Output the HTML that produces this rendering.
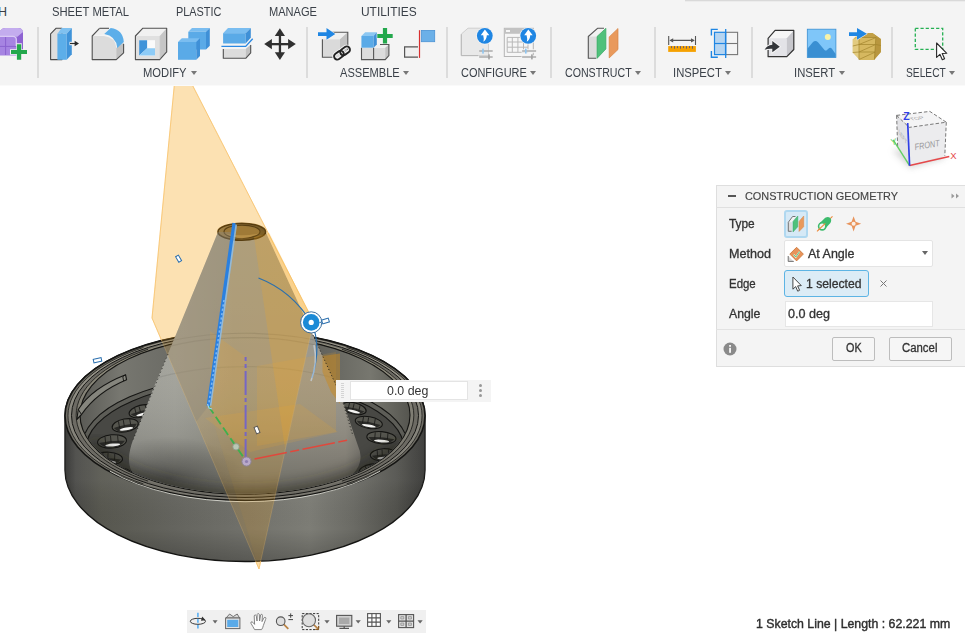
<!DOCTYPE html>
<html lang="en">
<head>
<meta charset="utf-8">
<title>Construction Geometry</title>
<style>
html,body{margin:0;padding:0;}
body{width:965px;height:635px;overflow:hidden;background:#fff;position:relative;font-family:"Liberation Sans",sans-serif;color:#3a3a3a;}
.abs{position:absolute;}
#toolbar{position:absolute;left:0;top:0;width:965px;height:85px;background:#f4f4f4;border-bottom:1px solid #fafafa;}
.t{position:absolute;white-space:nowrap;line-height:1;transform-origin:0 0;}
.tab{font-size:12.5px;color:#3a4048;top:6.4px;}
.grp{font-size:12px;color:#3a4048;top:67.2px;}
.sep{position:absolute;top:27px;width:2px;height:51px;background:#dcdcdc;margin-left:-0.5px;}
.dd{position:absolute;width:0;height:0;border-left:3px solid transparent;border-right:3px solid transparent;border-top:4px solid #777;top:71px;}
.ico{position:absolute;overflow:visible;}
#scene{position:absolute;left:0;top:0;}
#panel{position:absolute;left:716px;top:185px;width:249px;height:182px;background:#f4f4f4;box-shadow:inset 1px 0 0 #dedede,inset 0 1px 0 #dedede,inset 0 -1px 0 #dedede;}
#panel .t{font-size:12px;color:#333;-webkit-text-stroke:0.3px #333;}
.box{position:absolute;box-sizing:border-box;}
#float{position:absolute;left:336px;top:380px;width:155px;height:21.6px;background:#f4f4f4;}
#nav{position:absolute;left:187px;top:610px;width:239px;height:23px;background:#f0f0f0;}
</style>
</head>
<body>
<svg id="scene" width="965" height="635" viewBox="0 0 965 635">
<defs>
<linearGradient id="gWall" x1="65" x2="425" y1="0" y2="0" gradientUnits="userSpaceOnUse">
<stop offset="0" stop-color="#2f2f2d"/><stop offset="0.03" stop-color="#484845"/><stop offset="0.1" stop-color="#57574f"/><stop offset="0.3" stop-color="#64645e"/><stop offset="0.5" stop-color="#71716b"/><stop offset="0.68" stop-color="#7d7d76"/><stop offset="0.8" stop-color="#6b6b65"/><stop offset="0.92" stop-color="#51514c"/><stop offset="1" stop-color="#343432"/>
</linearGradient>
<linearGradient id="gWallV" x1="0" x2="0" y1="480" y2="562" gradientUnits="userSpaceOnUse">
<stop offset="0" stop-color="#fff" stop-opacity="0.06"/><stop offset="0.6" stop-color="#000" stop-opacity="0"/><stop offset="1" stop-color="#000" stop-opacity="0.22"/>
</linearGradient>
<linearGradient id="gCone" x1="128" x2="362" y1="0" y2="0" gradientUnits="userSpaceOnUse">
<stop offset="0" stop-color="#9e9e97"/><stop offset="0.2" stop-color="#a3a39b"/><stop offset="0.45" stop-color="#97978e"/><stop offset="0.75" stop-color="#9a978c"/><stop offset="0.93" stop-color="#9a968b"/><stop offset="1" stop-color="#85827a"/>
</linearGradient>
<linearGradient id="gConeV" x1="0" x2="0" y1="237" y2="500" gradientUnits="userSpaceOnUse">
<stop offset="0" stop-color="#fff" stop-opacity="0.06"/><stop offset="0.45" stop-color="#fff" stop-opacity="0.02"/><stop offset="0.75" stop-color="#000" stop-opacity="0.08"/><stop offset="1" stop-color="#000" stop-opacity="0.3"/>
</linearGradient>
<radialGradient id="gConeSh" cx="170" cy="478" r="75" gradientUnits="userSpaceOnUse" gradientTransform="translate(170 478) scale(1 0.55) translate(-170 -478)">
<stop offset="0" stop-color="#000" stop-opacity="0.33"/><stop offset="1" stop-color="#000" stop-opacity="0"/>
</radialGradient>
<clipPath id="cInner"><ellipse cx="245" cy="415" rx="164.5" ry="78.7"/></clipPath>
<clipPath id="cCone"><path d="M0,0 H965 V415 H409.5 A164.5,78.7 0 0 1 80.5,415 H0 Z"/></clipPath>
<linearGradient id="gInWall" x1="80" x2="410" y1="0" y2="0" gradientUnits="userSpaceOnUse">
<stop offset="0" stop-color="#5a5a55"/><stop offset="0.12" stop-color="#777770"/><stop offset="0.3" stop-color="#6a6a64"/><stop offset="0.7" stop-color="#5f5f59"/><stop offset="0.88" stop-color="#77776f"/><stop offset="1" stop-color="#55554f"/>
</linearGradient>
<filter id="fBlur" x="-20%" y="-20%" width="140%" height="140%"><feGaussianBlur stdDeviation="7"/></filter>
<mask id="mOut" maskUnits="userSpaceOnUse" x="0" y="0" width="965" height="635"><rect x="0" y="0" width="965" height="635" fill="#fff"/>
<path d="M65,415.7 A180,84.8 0 0 1 425,415.7 L425,470 A180,91.5 0 0 1 65,470 Z" fill="#000"/><use href="#coneP" fill="#000"/><ellipse cx="241.8" cy="231.7" rx="23.9" ry="8.5" fill="#000"/></mask>
<linearGradient id="gRing" x1="218" x2="266" y1="0" y2="0" gradientUnits="userSpaceOnUse"><stop offset="0" stop-color="#8f7a4e"/><stop offset="0.5" stop-color="#74603a"/><stop offset="1" stop-color="#5c4a26"/></linearGradient>
<linearGradient id="gRimA" x1="0" x2="0" y1="331" y2="500" gradientUnits="userSpaceOnUse"><stop offset="0" stop-color="#a5a193"/><stop offset="0.45" stop-color="#8a887f"/><stop offset="1" stop-color="#7c7a72"/></linearGradient>
<linearGradient id="gRimB" x1="0" x2="0" y1="331" y2="500" gradientUnits="userSpaceOnUse"><stop offset="0" stop-color="#9c9884"/><stop offset="0.45" stop-color="#807e74"/><stop offset="1" stop-color="#74726a"/></linearGradient>
<clipPath id="cPlane"><path d="M174.8,80 L152,318 L259,569 L313.5,321.5 L189.8,80 Z"/></clipPath>
<linearGradient id="gVeil" x1="0" x2="0" y1="236" y2="490" gradientUnits="userSpaceOnUse">
<stop offset="0" stop-color="#b4b4ac" stop-opacity="0.55"/><stop offset="0.6" stop-color="#9a9a92" stop-opacity="0.45"/><stop offset="1" stop-color="#8a8a82" stop-opacity="0"/>
</linearGradient>
<clipPath id="cView"><rect x="0" y="85" width="965" height="550"/></clipPath>
<path id="coneP" d="M218,232 L168,354 L155.5,383 L133,440 Q125,462 133,473 Q150,488 200,496 Q245,503 300,495 Q338,488 353,474 Q365,461 358,446 L341,396 L313,335 L265.7,232 Z"/>
</defs>
<g clip-path="url(#cView)">
<!-- dish body -->
<path d="M65,415.7 A180,84.8 0 0 1 425,415.7 L425,470 A180,91.5 0 0 1 65,470 Z" fill="url(#gWall)" stroke="#151513" stroke-width="1.4"/>
<path d="M65,415.7 A180,84.8 0 0 1 425,415.7 L425,470 A180,91.5 0 0 1 65,470 Z" fill="url(#gWallV)"/>
<ellipse cx="245" cy="415.7" rx="180" ry="84.8" fill="#6f6d65" stroke="#151513" stroke-width="1.6"/>
<ellipse cx="245" cy="415.7" rx="177.2" ry="83.3" fill="url(#gRimA)"/><path d="M143.4,483.9 A177.2,83.3 0 0 1 143.4,347.5 M346.6,347.5 A177.2,83.3 0 0 1 346.6,483.9" fill="none" stroke="#1a1a18" stroke-width="0.8"/>
<ellipse cx="245" cy="415.5" rx="173.5" ry="82" fill="#6d6b64" stroke="#151513" stroke-width="1"/>
<ellipse cx="245" cy="415.2" rx="169" ry="80.5" fill="url(#gRimB)"/><path d="M148.1,481.1 A169,80.5 0 0 1 148.1,349.3 M341.9,349.3 A169,80.5 0 0 1 341.9,481.1" fill="none" stroke="#151513" stroke-width="0.8"/>
<ellipse cx="245" cy="415" rx="165" ry="79.2" fill="url(#gInWall)" stroke="#151513" stroke-width="1.1"/>
<g clip-path="url(#cInner)">
<ellipse cx="245" cy="447" rx="163" ry="71" fill="#5d5d57" stroke="#151513" stroke-width="1.1"/>
<ellipse cx="245" cy="449" rx="159" ry="68" fill="#484844" stroke="#151513" stroke-width="1.1"/>
<g transform="rotate(-14 141.3 411.2)"><ellipse cx="141.3" cy="411.2" rx="12.5" ry="6" fill="#56564f" stroke="#151513" stroke-width="1.1"/><path d="M130.3,411.7 Q141.3,410.0 152.3,411.7 Q148.8,416.9 141.3,416.9 Q133.8,416.9 130.3,411.7 Z" fill="#2a2a27"/><ellipse cx="141.8" cy="414.5" rx="6.5" ry="1.32" fill="#f4f4f2"/><path d="M140.3,406.0 V412.2 M146.55,406.09999999999997 V412.7 M135.675,406.4 V412.7" stroke="#1a1a18" stroke-width="0.8" fill="none"/></g>
<g transform="rotate(-10 125.2 425.4)"><ellipse cx="125.2" cy="425.4" rx="13.2" ry="6.5" fill="#56564f" stroke="#151513" stroke-width="1.1"/><path d="M113.5,425.9 Q125.2,424.09999999999997 136.9,425.9 Q133.12,431.59999999999997 125.2,431.59999999999997 Q117.28,431.59999999999997 113.5,425.9 Z" fill="#2a2a27"/><ellipse cx="125.7" cy="428.97499999999997" rx="6.864" ry="1.43" fill="#f4f4f2"/><path d="M124.2,419.7 V426.4 M130.744,419.875 V426.9 M119.26,420.2 V426.9" stroke="#1a1a18" stroke-width="0.8" fill="none"/></g>
<g transform="rotate(-5 112 441.4)"><ellipse cx="112" cy="441.4" rx="14.5" ry="6.6" fill="#56564f" stroke="#151513" stroke-width="1.1"/><path d="M99.0,441.9 Q112,440.08 125.0,441.9 Q120.7,447.7 112,447.7 Q103.3,447.7 99.0,441.9 Z" fill="#2a2a27"/><ellipse cx="112.5" cy="445.03" rx="7.54" ry="1.452" fill="#f4f4f2"/><path d="M111,435.59999999999997 V442.4 M118.09,435.78999999999996 V442.9 M105.475,436.12 V442.9" stroke="#1a1a18" stroke-width="0.8" fill="none"/></g>
<g transform="rotate(3 108.8 458.4)"><ellipse cx="108.8" cy="458.4" rx="13.7" ry="6.2" fill="#56564f" stroke="#151513" stroke-width="1.1"/><path d="M96.6,458.9 Q108.8,457.15999999999997 121.0,458.9 Q117.02,464.29999999999995 108.8,464.29999999999995 Q100.58,464.29999999999995 96.6,458.9 Z" fill="#2a2a27"/><ellipse cx="109.3" cy="461.81" rx="7.124" ry="1.364" fill="#f4f4f2"/><path d="M107.8,453.0 V459.4 M114.554,453.13 V459.9 M102.63499999999999,453.44 V459.9" stroke="#1a1a18" stroke-width="0.8" fill="none"/></g>
<g transform="rotate(10 121 474)"><ellipse cx="121" cy="474" rx="13" ry="6" fill="#56564f" stroke="#151513" stroke-width="1.1"/><path d="M109.5,474.5 Q121,472.8 132.5,474.5 Q128.8,479.7 121,479.7 Q113.2,479.7 109.5,474.5 Z" fill="#2a2a27"/><ellipse cx="121.5" cy="477.3" rx="6.76" ry="1.32" fill="#f4f4f2"/><path d="M120,468.8 V475 M126.46,468.9 V475.5 M115.15,469.2 V475.5" stroke="#1a1a18" stroke-width="0.8" fill="none"/></g>
<g transform="rotate(14 354 408.4)"><ellipse cx="354" cy="408.4" rx="12.5" ry="5.6" fill="#56564f" stroke="#151513" stroke-width="1.1"/><path d="M343.0,408.9 Q354,407.28 365.0,408.9 Q361.5,413.7 354,413.7 Q346.5,413.7 343.0,408.9 Z" fill="#2a2a27"/><ellipse cx="354.5" cy="411.47999999999996" rx="6.5" ry="1.232" fill="#f4f4f2"/><path d="M353,403.59999999999997 V409.4 M359.25,403.64 V409.9 M348.375,403.91999999999996 V409.9" stroke="#1a1a18" stroke-width="0.8" fill="none"/></g>
<g transform="rotate(10 368.8 422.5)"><ellipse cx="368.8" cy="422.5" rx="13.7" ry="5.8" fill="#56564f" stroke="#151513" stroke-width="1.1"/><path d="M356.6,423.0 Q368.8,421.34 381.0,423.0 Q377.02,428.0 368.8,428.0 Q360.58000000000004,428.0 356.6,423.0 Z" fill="#2a2a27"/><ellipse cx="369.3" cy="425.69" rx="7.124" ry="1.276" fill="#f4f4f2"/><path d="M367.8,417.5 V423.5 M374.55400000000003,417.57 V424.0 M362.635,417.86 V424.0" stroke="#1a1a18" stroke-width="0.8" fill="none"/></g>
<g transform="rotate(5 381.4 437.7)"><ellipse cx="381.4" cy="437.7" rx="14.6" ry="6.1" fill="#56564f" stroke="#151513" stroke-width="1.1"/><path d="M368.29999999999995,438.2 Q381.4,436.47999999999996 394.5,438.2 Q390.15999999999997,443.5 381.4,443.5 Q372.64,443.5 368.29999999999995,438.2 Z" fill="#2a2a27"/><ellipse cx="381.9" cy="441.055" rx="7.592" ry="1.3419999999999999" fill="#f4f4f2"/><path d="M380.4,432.4 V438.7 M387.532,432.515 V439.2 M374.83,432.82 V439.2" stroke="#1a1a18" stroke-width="0.8" fill="none"/></g>
<g transform="rotate(-3 383.3 454.7)"><ellipse cx="383.3" cy="454.7" rx="13" ry="6" fill="#56564f" stroke="#151513" stroke-width="1.1"/><path d="M371.8,455.2 Q383.3,453.5 394.8,455.2 Q391.1,460.4 383.3,460.4 Q375.5,460.4 371.8,455.2 Z" fill="#2a2a27"/><ellipse cx="383.8" cy="458.0" rx="6.76" ry="1.32" fill="#f4f4f2"/><path d="M382.3,449.5 V455.7 M388.76,449.59999999999997 V456.2 M377.45,449.9 V456.2" stroke="#1a1a18" stroke-width="0.8" fill="none"/></g>
<g transform="rotate(-10 372 470)"><ellipse cx="372" cy="470" rx="13" ry="6" fill="#56564f" stroke="#151513" stroke-width="1.1"/><path d="M360.5,470.5 Q372,468.8 383.5,470.5 Q379.8,475.7 372,475.7 Q364.2,475.7 360.5,470.5 Z" fill="#2a2a27"/><ellipse cx="372.5" cy="473.3" rx="6.76" ry="1.32" fill="#f4f4f2"/><path d="M371,464.8 V471 M377.46,464.9 V471.5 M366.15,465.2 V471.5" stroke="#1a1a18" stroke-width="0.8" fill="none"/></g>

</g>
<path d="M78.3,409.5 Q92,388 125.6,374.8 L126.6,379.8 Q97,392 81.5,414.5 L76.8,419.5 Z" fill="#85857d" stroke="#151513" stroke-width="1.1" stroke-linejoin="round"/>
<path d="M78.3,409.5 L81.5,414.5" stroke="#151513" stroke-width="1"/>
<path d="M125.6,374.8 L122.8,376.6 L123.6,381" stroke="#151513" stroke-width="0.9" fill="none"/>

<!-- cone -->
<g clip-path="url(#cCone)">
<use href="#coneP" fill="url(#gCone)"/>
<use href="#coneP" fill="url(#gConeV)"/>
<use href="#coneP" fill="url(#gConeSh)"/>
</g>
<!-- ghost rim through cone -->
<clipPath id="cConeOnly"><use href="#coneP"/></clipPath>
<g clip-path="url(#cConeOnly)" opacity="0.12" fill="none" stroke="#1f1f1c" stroke-width="1.2">
<path d="M150,346 A180,84.8 0 0 1 340,346"/><path d="M150,352 A165,79.2 0 0 1 340,352"/>
<path d="M120,392 A163,71 0 0 1 370,392" opacity="0.7"/>
</g>
<g clip-path="url(#cInner)"><path d="M90,445 A164.5,78.7 0 0 0 400,445" fill="none" stroke="#1a1a17" stroke-width="18" opacity="0.55" filter="url(#fBlur)"/></g>
<!-- front rim highlight -->
<path d="M110,470 A173.5,82 0 0 0 380,470" fill="none" stroke="#e8e8e0" stroke-width="1" opacity="0.8" transform="translate(0,1.2)"/>
<!-- cone top -->
<ellipse cx="241.8" cy="231.7" rx="23.9" ry="8.5" fill="url(#gRing)" stroke="#2e220c" stroke-width="1.5"/>
<ellipse cx="242" cy="231.7" rx="18" ry="6.6" fill="#8a6f3e" stroke="#3a2c12" stroke-width="1.1"/>
<path d="M225.5,233.5 Q242,243 258.5,233.5 Q242,237.2 225.5,233.5 Z" fill="#a88c55" opacity="0.9"/>
<!-- plane -->
<path d="M174.8,80 L152,318 L259,569 L313.5,321.5 L189.8,80 Z" fill="#f6a722" fill-opacity="0.16"/>
<path d="M174.8,80 L152,318 L259,569 L313.5,321.5 L189.8,80 Z" fill="#f6a722" fill-opacity="0.215" stroke="#f7c067" stroke-width="1" stroke-opacity="0.8" mask="url(#mOut)"/>
<path d="M234.5,224 L208.4,406 L259,569 L313.5,321.5 L269.4,233 Z" fill="#f6a722" fill-opacity="0.06"/>
<g clip-path="url(#cPlane)"><g clip-path="url(#cConeOnly)"><path d="M150,225 L234,223 L208.4,406 L196,422 L150,340 Z" fill="#8c887b" fill-opacity="0.42"/></g></g>
<path d="M254,237 L269.4,233 L313.5,321.5 L285,448 Z" fill="#f6a722" fill-opacity="0.22"/>
<path d="M174.8,80 L152,318 L259,569 L313.5,321.5 L189.8,80" fill="none" stroke="#f9c978" stroke-width="1" stroke-opacity="0.22"/>
<!-- origin planes -->
<path d="M257,366 L336,352 L336,432 L257,446 Z" fill="#f6a722" fill-opacity="0.14"/>
<path d="M210,331 L246,357 L246,461 L210,410 Z" fill="#f6a722" fill-opacity="0.15"/>
<path d="M205,418 L300,404 L338,432 L250,452 Z" fill="#f6a722" fill-opacity="0.14"/>
<path d="M322.5,356 L340,353.5 L340,404 L331,392 L322.5,372 Z" fill="#c98a20" fill-opacity="0.5"/>
<path d="M313,335 L341,396 L353,436" fill="none" stroke="#1a1a18" stroke-width="1" stroke-dasharray="1.2,2.2" opacity="0.8"/>
<path d="M168,354 L133,440" fill="none" stroke="#1a1a18" stroke-width="1" stroke-dasharray="1.2,2.6" opacity="0.7"/>
<!-- axes -->
<path d="M245.6,357 V461" stroke="#6f61cf" stroke-width="2" stroke-dasharray="24,3,4,3" stroke-dashoffset="20" fill="none" opacity="0.9"/>
<path d="M254.5,459 L348,440" stroke="#e0483c" stroke-width="1.5" stroke-dasharray="33,3.5,9,3.5" fill="none"/>
<path d="M208.4,406 L246,461" stroke="#3db04e" stroke-width="1.8" stroke-dasharray="9,4" fill="none"/>
<!-- selected edge -->
<path d="M235.3,224.5 L209.6,405.5" stroke="#8fc0ee" stroke-width="3.6" fill="none" opacity="0.8"/><path d="M234,223 L208.2,406" stroke="#2a80e0" stroke-width="3.2" fill="none"/>
<path d="M224,300 L208.8,404" stroke="#7db6f2" stroke-width="1.6" stroke-dasharray="2.2,2.2" fill="none"/>
<path d="M207.5,404 L209,408 L212,409" stroke="#9fd0f5" stroke-width="1.2" fill="none"/>
<!-- points -->
<circle cx="236" cy="446.8" r="3.2" fill="#b9c7b4" stroke="#8f9a8b" stroke-width="0.8"/>
<circle cx="246.5" cy="461.5" r="4.6" fill="#b9a9c9" stroke="#8d8496" stroke-width="1"/>
<circle cx="246.5" cy="461.5" r="1.6" fill="#8f7fb0"/>
<!-- arc + knob -->
<path d="M258.5,278 Q292,291 311.4,322.8 Q322,345 312,378" fill="none" stroke="#2a6fae" stroke-width="1.2"/>
<path d="M314,345 Q318,362 311,381" fill="none" stroke="#c9d6e2" stroke-width="1.6" opacity="0.7"/>
<circle cx="311.2" cy="322.4" r="10.6" fill="#fff" stroke="#2a5f92" stroke-width="0.9"/>
<circle cx="311.2" cy="322.4" r="8.3" fill="#1c8ad6"/>
<circle cx="311.2" cy="322.4" r="2.6" fill="#fff"/>
<!-- small handles -->
<g fill="#fff" stroke="#2a6fae" stroke-width="1">
<rect x="177" y="255.5" width="3.2" height="6.4" transform="rotate(-30 178.6 258.7)"/>
<rect x="93.5" y="358.5" width="8" height="3.6" transform="rotate(-12 97.5 360.3)"/>
<rect x="322" y="319" width="7" height="4" transform="rotate(-18 325.5 321)"/>
<path d="M321.5,322 L319.5,322.6" />
</g>
<rect x="255.2" y="426.5" width="3.6" height="7" transform="rotate(-22 257 430)" fill="#fff" stroke="#555" stroke-width="0.9"/>

</g>
</svg>
<div id="toolbar">
<div class="abs" style="left:685px;top:0;width:280px;height:1px;background:#d9d9d9;"></div><div class="abs" style="left:685px;top:1px;width:280px;height:1px;background:#ececec;"></div>
<span class="t tab" id="tb0" style="left:-2px;">H</span>
<span class="t tab" id="tb1" style="left:52.0px;transform:scaleX(0.899);">SHEET METAL</span>
<span class="t tab" id="tb2" style="left:176.0px;transform:scaleX(0.871);">PLASTIC</span>
<span class="t tab" id="tb3" style="left:268.6px;transform:scaleX(0.886);">MANAGE</span>
<span class="t tab" id="tb4" style="left:361.4px;transform:scaleX(0.955);">UTILITIES</span>
<span class="t grp" id="g1" style="left:143.2px;transform:scaleX(0.934);">MODIFY</span><i class="dd" style="left:191px;"></i>
<span class="t grp" id="g2" style="left:339.5px;transform:scaleX(0.923);">ASSEMBLE</span><i class="dd" style="left:403px;"></i>
<span class="t grp" id="g3" style="left:461.0px;transform:scaleX(0.914);">CONFIGURE</span><i class="dd" style="left:530px;"></i>
<span class="t grp" id="g4" style="left:565.3px;transform:scaleX(0.885);">CONSTRUCT</span><i class="dd" style="left:635px;"></i>
<span class="t grp" id="g5" style="left:673.0px;transform:scaleX(0.938);">INSPECT</span><i class="dd" style="left:725px;"></i>
<span class="t grp" id="g6" style="left:794.3px;transform:scaleX(0.938);">INSERT</span><i class="dd" style="left:839px;"></i>
<span class="t grp" id="g7" style="left:906.0px;transform:scaleX(0.852);">SELECT</span><i class="dd" style="left:949px;"></i>
<i class="sep" style="left:37px;"></i>
<i class="sep" style="left:306px;"></i>
<i class="sep" style="left:446px;"></i>
<i class="sep" style="left:550px;"></i>
<i class="sep" style="left:654px;"></i>
<i class="sep" style="left:751px;"></i>
<i class="sep" style="left:891px;"></i>
<svg class="ico" style="left:0;top:0;" width="965" height="85" viewBox="0 0 965 85">
<!-- purple create -->
<g>
<path d="M-6,38 L0,31 Q2,28 5,28 L18,28 Q23,28 23,33 L23,50 L17,55.2 L-6,55.2 Z" fill="#8d62d2"/>
<path d="M-6,38 L0,31 Q2,28 5,28 L18,28 Q22.5,28 23,32 L17,37 Q16,36 13,36 L-6,36 Z" fill="#c3acee"/>
<path d="M-6,36 L13,36 Q16.5,36 16.5,39.5 L16.5,55.2 L-6,55.2 Z" fill="#a684e2"/>
<path d="M5.6,36.5 V55 M-6,46.4 H16" stroke="#8a63cf" stroke-width="1" fill="none"/>
<path d="M-6,36.3 L13,36.3 Q16.3,36.3 16.3,39.5 L16.3,46" stroke="#d9c9f5" stroke-width="1.3" fill="none"/>
<path d="M16.3,43.2 h5.5 v6.1 h6.2 v5.4 h-6.2 v6.1 h-5.5 v-6.1 h-6.3 v-5.4 h6.3 Z" fill="#f4f4f4"/>
<path d="M16.9,44.2 h4.3 v5.7 h5.8 v4.2 h-5.8 v5.7 h-4.3 v-5.7 h-5.9 v-4.2 h5.9 Z" fill="#23a84c"/>
</g>
<!-- press pull -->
<g>
<path d="M50.6,59.6 V33.9 L56.2,28.2 H62 V59.6 Z" fill="#dedede" stroke="#4a4a4a" stroke-width="1.1" stroke-linejoin="round"/>
<path d="M57.4,33.7 L61.6,28 H71.8 L66.7,33.7 Z" fill="#7fc1f0"/>
<path d="M57.4,33.7 H66.7 V59.8 H57.4 Z" fill="#5caee9"/>
<path d="M66.7,33.7 L71.8,28 V54.2 L66.7,59.8 Z" fill="#3f93d9"/>
<path d="M69.5,43.5 H75" stroke="#f4f4f4" stroke-width="3.4"/>
<path d="M70,43.5 H75.5" stroke="#2b2b2b" stroke-width="1.2"/>
<path d="M74.6,40.7 L79,43.5 L74.6,46.3 Z" fill="#2b2b2b"/>
</g>
<!-- fillet -->
<g>
<path d="M92,36 L99.5,28 H110 L104,34.5 Z" fill="#efefef"/>
<path d="M92,36 H104 Q115,37 116.5,48 V59.8 H92 Z" fill="#dcdcdc"/>
<path d="M116.3,48 L123.8,42.5 V52.8 L116.3,59.8 Z" fill="#c2c2c2"/>
<path d="M104.2,34.1 L110.7,28 Q123,29.5 123.8,42 L117.3,48.1 Q116,36 104.2,34.1 Z" fill="#5caee9"/>
<path d="M99.5,28.3 L92.2,36 V59.6 H116.3 L123.6,52.8 V44" fill="none" stroke="#505050" stroke-width="1.1" stroke-linejoin="round"/>
<path d="M99.5,28.3 H109" stroke="#505050" stroke-width="1.1"/>
</g>
<!-- shell -->
<g>
<path d="M135.4,36 L142.9,28.2 H166.7 L159.7,36 Z" fill="#f1f1f1"/>
<path d="M135.4,36 H159.7 V59.6 H135.4 Z" fill="#e0e0e0"/>
<path d="M159.7,36 L166.7,28.2 V51.9 L159.7,59.6 Z" fill="#c6c6c6"/>
<path d="M135.4,36 L142.9,28.2 H166.7 V51.9 L159.7,59.6 H135.4 Z" fill="none" stroke="#505050" stroke-width="1.1" stroke-linejoin="round"/>
<path d="M159.7,36 V59" stroke="#d4d4d4" stroke-width="0.8"/>
<rect x="139.2" y="40.2" width="15.8" height="15.4" fill="#fafafa"/>
<path d="M139.2,40.2 H147.1 V48.2 L139.2,55.6 Z" fill="#3f93d9"/>
<path d="M139.2,55.6 L147.1,48.2 H155 V55.6 Z" fill="#8dcbf6"/>
</g>
<!-- combine -->
<g>
<path d="M188.3,31.8 L192,28 H209.8 L206,31.8 Z" fill="#7abdf0"/>
<path d="M188.3,31.8 H206 V49.5 H188.3 Z" fill="#5aaae7"/>
<path d="M206,31.8 L209.8,28 V45.8 L206,49.5 Z" fill="#3f90d7"/>
<path d="M178,42 L181.8,38.3 H200 L196.3,42 Z" fill="#7abdf0"/>
<path d="M178,42 H196.3 V59.8 H178 Z" fill="#5aaae7"/>
<path d="M196.3,42 L200,38.3 V56 L196.3,59.8 Z" fill="#3f90d7"/>
</g>
<!-- offset face -->
<g>
<path d="M223.1,33.2 L228,28 H250.8 L245.7,33.2 Z" fill="#7abdf0"/>
<path d="M223.1,33.2 H245.7 V43.5 H223.1 Z" fill="#5aaae7"/>
<path d="M245.7,33.2 L250.8,28 V37.8 L245.7,43.5 Z" fill="#3f90d7"/>
<path d="M221.4,46.4 H245.7 L252.7,38.8" fill="none" stroke="#f4f4f4" stroke-width="3.2"/>
<path d="M221.4,46.4 H245.7 L252.7,38.8" fill="none" stroke="#2a88e2" stroke-width="1.4"/>
<path d="M223.1,49 H245.7 V58.4 H223.1 Z" fill="#dcdcdc"/>
<path d="M245.7,49 L250.8,44.4 V52.8 L245.7,58.4 Z" fill="#c2c2c2"/>
<path d="M223.3,49 V58.3 H245.7 L250.7,52.8 V45" fill="none" stroke="#505050" stroke-width="1.1" stroke-linejoin="round"/>
</g>
<!-- move -->
<g fill="#303030">
<path d="M279.9,28.3 L285,36 H274.8 Z"/>
<path d="M279.9,59.9 L285,52.2 H274.8 Z"/>
<path d="M264.2,44.1 L271.9,39 V49.2 Z"/>
<path d="M295.8,44.1 L288.1,39 V49.2 Z"/>
<rect x="278.8" y="34" width="2.3" height="20"/>
<rect x="270" y="43" width="20" height="2.3"/>
</g>
<!-- joint (insert link) -->
<g>
<path d="M322.3,39.3 L329.3,32.1 H347.9 L340,39.3 Z" fill="#f0f0f0"/>
<path d="M322.3,39.3 H340 V57.4 H322.3 Z" fill="#dadada"/>
<path d="M340,39.3 L347.9,32.1 V50 L340,57.4 Z" fill="#c2c2c2"/>
<path d="M329.3,32.2 H347.8 V50 M322.4,39.3 V57.3 H336" fill="none" stroke="#555" stroke-width="1.1"/>
<path d="M317.5,31.8 h9 v-4.4 l9.6,6.7 l-9.6,6.3 v-4.2 h-9 Z" fill="#f4f4f4"/>
<path d="M318,32.3 H326.5 V28 L335.3,34.1 L326.5,39.7 V36 H318 Z" fill="#1f86e3"/>
<g transform="rotate(-35 342 53)" fill="none">
<rect x="333" y="49.8" width="10.5" height="6.4" rx="3.2" stroke="#f4f4f4" stroke-width="3.6"/>
<rect x="340.5" y="49.8" width="10.5" height="6.4" rx="3.2" stroke="#f4f4f4" stroke-width="3.6"/>
<rect x="333" y="49.8" width="10.5" height="6.4" rx="3.2" stroke="#222" stroke-width="1.9"/>
<rect x="340.5" y="49.8" width="10.5" height="6.4" rx="3.2" stroke="#222" stroke-width="1.9"/>
</g>
</g>
<!-- as-built joint -->
<g>
<path d="M361.4,47.7 H385.2 V59.7 H361.4 Z" fill="#dcdcdc"/>
<path d="M373.6,47.7 L376.8,44.4 H389 L385.2,47.7 Z" fill="#f0f0f0"/>
<path d="M385.2,47.7 L389,44.4 V55.6 L385.2,59.7 Z" fill="#c2c2c2"/>
<path d="M361.5,47.7 V59.6 H385.2 L388.9,55.6 V44.5 H380 M373.6,47.7 V59.6" fill="none" stroke="#555" stroke-width="1.1"/>
<path d="M361.4,36 L365.2,32.3 H376.8 L373.6,36 Z" fill="#8cc7f2"/>
<path d="M361.4,36 H373.6 V47.7 H361.4 Z" fill="#5aaae7"/>
<path d="M373.6,36 L376.8,32.3 V44.4 L373.6,47.7 Z" fill="#3f90d7"/>
<path d="M382.4,27.4 h5.2 v6.2 h5.6 v4.8 h-5.6 v5.6 h-5.2 v-5.6 h-5.6 v-4.8 h5.6 Z" fill="#f4f4f4"/>
<path d="M382.9,28 h4.2 v6.1 h5.6 v3.8 h-5.6 v5.6 h-4.2 v-5.6 h-5.6 v-3.8 h5.6 Z" fill="#23a84c"/>
</g>
<!-- joint flag -->
<g>
<rect x="421.3" y="30.4" width="13.4" height="11.3" fill="#6bb0e8" stroke="#4b93d4" stroke-width="0.8"/>
<path d="M418,46.9 H404.6 V57.2 H418" fill="#f0f0f0" stroke="#555" stroke-width="1.2"/>
<path d="M419.5,30.2 V57.9" stroke="#d83030" stroke-width="1.2"/>
</g>
<!-- configure 1 -->
<g>
<path d="M461.3,34.1 L468,28.2 H488.5 V55.6 H461.3 Z" fill="#e9e9e9" stroke="#cfcfcf" stroke-width="1"/>
<path d="M461.3,34.3 V55.6 H478" fill="none" stroke="#b8b8b8" stroke-width="1"/>
<circle cx="484.8" cy="35.8" r="8.6" fill="#f4f4f4"/>
<circle cx="484.8" cy="35.8" r="7.9" fill="#1f86e3"/>
<path d="M484.9,29.6 L489.3,35.2 H486.8 Q486.8,39.5 483.4,41.8 Q484.2,38.5 483.2,35.2 H480.8 Z" fill="#fff"/>
<path d="M479.2,51.1 H492.7 M479.2,57 H492.7" stroke="#ababab" stroke-width="1.5"/>
<rect x="482.2" y="48.6" width="1.6" height="5" fill="#8fc6f1"/>
<rect x="488.2" y="54.4" width="1.6" height="5" fill="#a0a0a0"/>
</g>
<!-- configure 2 -->
<g>
<rect x="504.3" y="28.3" width="29" height="28.2" fill="#f6f6f6" stroke="#b5b5b5" stroke-width="1"/>
<rect x="504.3" y="28.3" width="29" height="5.5" fill="#c2c2c2"/>
<rect x="506" y="30" width="4" height="2" fill="#f6f6f6"/>
<path d="M507.2,37.4 H528 M507.2,42 H528 M507.2,47.2 H528 M507.2,52.3 H528 M507.2,37.4 V52.3 M512.3,37.4 V52.3 M517.9,37.4 V52.3 M523.5,37.4 V52.3 M528,37.4 V52.3" stroke="#b8b8b8" stroke-width="1" fill="none"/>
<circle cx="528.2" cy="35.8" r="8.6" fill="#f4f4f4"/>
<circle cx="528.2" cy="35.8" r="7.9" fill="#1f86e3"/>
<path d="M528.3,29.6 L532.7,35.2 H530.2 Q530.2,39.5 526.8,41.8 Q527.6,38.5 526.6,35.2 H524.2 Z" fill="#fff"/>
<path d="M521.5,51.1 H536.1 M521.5,57 H536.1" stroke="#f4f4f4" stroke-width="3.5"/>
<path d="M522.1,51.1 H536.1 M522.1,57 H536.1" stroke="#ababab" stroke-width="1.5"/>
<rect x="525" y="48.6" width="1.6" height="5" fill="#8fc6f1"/>
<rect x="531.1" y="54.4" width="1.6" height="5" fill="#a0a0a0"/>
</g>
<!-- construct -->
<g>
<path d="M588.2,36.5 L597.5,28.2 H605.9 L596.1,36.5 Z" fill="#f2f2f2"/>
<path d="M588.2,36.5 H596.6 V58.3 H588.2 Z" fill="#dcdcdc"/>
<path d="M596.1,58.3 H588.3 V36.5 L597.5,28.3 H604" fill="none" stroke="#555" stroke-width="1.1" stroke-linejoin="round"/>
<path d="M597,36.5 L605.9,28.3 V49 L597,58.4 Z" fill="#4fc17b" stroke="#3aa863" stroke-width="0.7"/>
<path d="M609.2,36.9 L618,28.5 V49.5 L609.2,57.9 Z" fill="#e9995b" stroke="#d98545" stroke-width="0.7"/>
</g>
<!-- measure -->
<g>
<rect x="668.2" y="46.1" width="27.7" height="5.8" fill="#f5a100"/>
<path d="M671.5,46.1 v2 M674.5,46.1 v2.6 M677.5,46.1 v2 M680.5,46.1 v2.6 M683.5,46.1 v2 M686.5,46.1 v2.6 M689.5,46.1 v2 M692.5,46.1 v2.6" stroke="#5a5a7a" stroke-width="0.9"/>
<path d="M668.7,36 V45 M695.5,36 V45 M670.5,40.4 H693.7" stroke="#555" stroke-width="1.1" fill="none"/>
<path d="M669.4,40.4 L673.2,38.2 V42.6 Z M694.8,40.4 L691,38.2 V42.6 Z" fill="#555"/>
</g>
<!-- section -->
<g>
<rect x="725.6" y="32.3" width="12" height="22.3" fill="#f4f4f4" stroke="#777" stroke-width="1.1"/>
<path d="M725.6,43.5 H737.6" stroke="#777" stroke-width="1.1"/>
<rect x="714.5" y="32.3" width="11" height="22.3" fill="#b6d5f1" stroke="#1f86e3" stroke-width="1.2"/>
<path d="M714.5,43.5 H725.6" stroke="#1f86e3" stroke-width="1.2"/>
<path d="M725.7,29 V58" stroke="#1f86e3" stroke-width="1.3"/>
<path d="M717.8,29.4 H711.4 V35.6 M711.4,51.1 V57.3 H717.8" fill="none" stroke="#1f86e3" stroke-width="1.4"/>
</g>
<!-- insert derive -->
<g>
<path d="M768.1,38.3 L775.1,30.4 H793.8 L786.8,38.3 Z" fill="#f6f6f6"/>
<path d="M768.1,38.3 H786.8 V56.7 H768.1 Z" fill="#e3e3e7"/>
<path d="M786.8,38.3 L793.8,30.4 V49.5 L786.8,56.7 Z" fill="#c7c7cc"/>
<path d="M768.1,38.3 L775.1,30.4 H793.8 V49.5 L786.8,56.7 H768.1 Z" fill="none" stroke="#333" stroke-width="1.2" stroke-linejoin="round"/>
<path d="M764.4,50 Q767,45 772.3,44.6 V40.6 L780,46.7 L772.3,52.6 V49 Q768,48.5 764.4,50 Z" fill="#f4f4f4" stroke="#f4f4f4" stroke-width="1.6"/>
<path d="M764.6,49.8 Q767,45.2 772.3,44.8 V41.1 L779.8,46.7 L772.3,52.3 V48.8 Q768,48.4 764.6,49.8 Z" fill="#33363a"/>
</g>
<!-- image -->
<g>
<rect x="807.3" y="29.2" width="28.6" height="28.3" fill="#7fc6f9" stroke="#3a8fd2" stroke-width="0.8"/>
<circle cx="827.8" cy="36.9" r="3" fill="#f7f2a8"/>
<path d="M807.6,57.2 V48.5 L813,42 Q815.5,40 818,42.2 L824.5,50 Q825.8,51 827,50 L829.2,48 Q830.5,47.2 831.7,48.4 L835.6,54 V57.2 Z" fill="#3a8fd2"/>
</g>
<!-- mesh -->
<g>
<path d="M852.8,39.5 L859,33 H872.5 L880.9,39 V52 L874,59.9 H860 L852.8,52.5 Z" fill="#d6b860"/>
<path d="M859,33 H872.5 L876,37.5 H859 Z" fill="#c2a046"/>
<path d="M872.5,33 L880.9,39 V52 L874,59.9 L876,37.5 Z" fill="#b8963e"/>
<path d="M852.8,39.5 L859,37.5 V59 L852.8,52.5 Z" fill="#e2cb80"/>
<path d="M859,37.5 H876 M859,44.5 H875.5 M859,52 H875 M859,44.5 L875.7,37.7 M859,52 L875.5,44.6 M859,59.5 L875,52.2 M852.8,46 L859,44.5 M852.8,52.5 L859,52 M859,37.5 V59.8 M875.8,37.5 L874.5,59.5 M876,44.5 L880.9,45.5" stroke="#a2842c" stroke-width="0.7" fill="none"/>
<path d="M848.5,31.7 h8.3 v-4.4 l11,6.4 l-11,6.8 v-4 h-8.3 Z" fill="#f4f4f4"/>
<path d="M849,32.2 H857 V28.1 L866.9,33.7 L857,39.8 V36 H849 Z" fill="#1f86e3"/>
</g>
<!-- select -->
<g>
<rect x="915.3" y="28.4" width="27.4" height="21" fill="none" stroke="#24b052" stroke-width="1.3" stroke-dasharray="3.2,2"/>
<path d="M936.6,43 V57.4 L939.9,54.3 L942.3,59.8 L944.6,58.8 L942.2,53.5 L946.8,53.3 Z" fill="#fff" stroke="#2a2a2a" stroke-width="1.1" stroke-linejoin="round"/>
</g>
</svg>

</div>
<div id="panel">
<div class="abs" style="left:0;top:22px;width:249px;height:1px;background:#e0e0e0;"></div>
<div class="abs" style="left:12px;top:10px;width:8px;height:2px;background:#555;"></div>
<span class="t" id="p0" style="left:29.0px;transform:scaleX(0.948);top:5.6px;color:#444;font-size:11.5px;-webkit-text-stroke:0.15px #444;">CONSTRUCTION GEOMETRY</span>
<svg class="ico" style="left:235px;top:8px;" width="9" height="6" viewBox="0 0 9 6"><path d="M0.5 0.5L3.5 3L0.5 5.5ZM5 0.5L8 3L5 5.5Z" fill="#999"/></svg>
<span class="t" id="p1" style="left:13.3px;transform:scaleX(0.988);top:32.6px;">Type</span>
<span class="t" id="p2" style="left:13.3px;transform:scaleX(1.049);top:62.6px;">Method</span>
<span class="t" id="p3" style="left:13.3px;transform:scaleX(0.953);top:92.6px;">Edge</span>
<span class="t" id="p4" style="left:13.3px;transform:scaleX(1.023);top:122.6px;">Angle</span>
<div class="box" style="left:68px;top:25px;width:24px;height:28px;background:#d6e9f6;border:2px solid #b0d8f0;border-radius:3px;"></div>
<div class="box" style="left:68px;top:55px;width:149px;height:27px;background:#fff;border:1px solid #e4e4e4;border-radius:2px;"></div>
<span class="t" id="p5" style="left:92.3px;transform:scaleX(1.040);top:62.8px;">At Angle</span>
<i class="dd" style="left:206px;top:66px;border-top-color:#666;"></i>
<div class="box" style="left:68px;top:85px;width:85px;height:27px;background:#dcecf6;border:1.5px solid #5db4e4;border-radius:3px;"></div>
<span class="t" id="p6" style="left:89.7px;transform:scaleX(1.015);top:92.7px;">1 selected</span>
<svg class="ico" style="left:164px;top:95px;" width="7" height="7" viewBox="0 0 7 7"><path d="M0.5 0.5L6.5 6.5M6.5 0.5L0.5 6.5" stroke="#777" stroke-width="1" fill="none"/></svg>
<div class="box" style="left:69px;top:116px;width:148px;height:26px;background:#fff;border:1px solid #e6e6e6;"></div>
<span class="t" id="p7" style="left:72.2px;transform:scaleX(1.049);top:122.6px;">0.0 deg</span>
<div class="abs" style="left:0;top:144px;width:249px;height:1px;background:#e2e2e2;"></div>
<svg class="ico" style="left:7px;top:157px;" width="14" height="14" viewBox="0 0 14 14"><circle cx="7" cy="7" r="6.5" fill="#8a8a8a"/><rect x="6.2" y="5.8" width="1.7" height="5" fill="#fff"/><rect x="6.2" y="3" width="1.7" height="1.8" fill="#fff"/></svg>
<div class="box" style="left:116px;top:152px;width:43px;height:24px;background:#f6f6f6;border:1px solid #bdbdbd;border-radius:2px;"></div>
<span class="t" id="p8" style="left:129.6px;transform:scaleX(0.899);top:157px;">OK</span>
<div class="box" style="left:173px;top:152px;width:63px;height:24px;background:#f6f6f6;border:1px solid #bdbdbd;border-radius:2px;"></div>
<span class="t" id="p9" style="left:186.4px;transform:scaleX(0.948);top:157px;">Cancel</span>
<svg class="ico" style="left:0;top:0;" width="249" height="182" viewBox="716 185 249 182">
<!-- type 1: plane -->
<path d="M788.2,222.3 L792.6,216.4 H796 L791.9,222.3 Z" fill="#f4f4f4"/>
<path d="M788.2,222.3 H791.9 V231.3 H788.2 Z" fill="#dcdcdc"/>
<path d="M791.6,231.3 H788.3 V222.3 L792.6,216.5 H795.5" fill="none" stroke="#666" stroke-width="0.9"/>
<path d="M793,221.5 L797.8,216 V226.7 L793,231.9 Z" fill="#4fc17b" stroke="#3aa863" stroke-width="0.5"/>
<path d="M799,221.5 L803.7,216 V226.7 L799,231.5 Z" fill="#e9995b" stroke="#d98545" stroke-width="0.5"/>
<!-- type 2: axis -->
<path d="M817,231.4 L832.5,216.4" stroke="#ee8a3c" stroke-width="1.1"/>
<path d="M819.6,223.2 L825.2,217.8 Q829,215.5 831,219 Q831.8,222 829,224.6 L824.5,229.5 Z" fill="#3dbb6c"/>
<circle cx="822.2" cy="226.3" r="3.6" fill="#f4f4f4" stroke="#3dbb6c" stroke-width="1.6"/>
<path d="M818.2,230.2 L825.3,223.3" stroke="#ee8a3c" stroke-width="1.1"/>
<!-- type 3: point -->
<path d="M853.6,216.2 L855.6,221.8 L861.2,223.8 L855.6,225.8 L853.6,231.4 L851.6,225.8 L846,223.8 L851.6,221.8 Z" fill="#e8935a"/>
<circle cx="853.6" cy="223.8" r="2" fill="#fbeee4"/>
<!-- method icon -->
<path d="M788.2,256 V261.4 H793.8" fill="#d8d8d8" stroke="#666" stroke-width="0.9"/>
<path d="M796.6,247.3 L803.4,254.1 L796.6,260.9 L789.8,254.1 Z" fill="#e8935a" stroke="#c97434" stroke-width="0.8"/>
<path d="M793.6,254.6 L795.8,257 L799.6,251.6" fill="none" stroke="#e8f6ec" stroke-width="1.5"/>
<path d="M793.6,254.6 L795.8,257 L799.6,251.6" fill="none" stroke="#3dbb6c" stroke-width="0.8"/>
<!-- cursor -->
<path d="M792.9,277 V289.2 L795.7,286.6 L797.7,291.2 L799.6,290.3 L797.6,285.9 L801.3,285.6 Z" fill="#fff" stroke="#333" stroke-width="0.9" stroke-linejoin="round"/>
</svg>

</div>
<div id="float">
<div class="abs" style="left:5px;top:3px;width:3px;height:15px;background:repeating-linear-gradient(#d4d4d4 0 1px,#f4f4f4 1px 2px);"></div>
<div class="box" style="left:14px;top:1.4px;width:118px;height:19px;background:#fff;border:1px solid #e4e4e4;"></div>
<span class="t" id="f0" style="left:51.3px;transform:scaleX(0.952);top:4px;font-size:13px;color:#333;">0.0 deg</span>
<div class="abs" style="left:143.2px;top:4.4px;width:2.8px;height:2.8px;border-radius:2px;background:#989898;"></div>
<div class="abs" style="left:143.2px;top:9.4px;width:2.8px;height:2.8px;border-radius:2px;background:#989898;"></div>
<div class="abs" style="left:143.2px;top:14.4px;width:2.8px;height:2.8px;border-radius:2px;background:#989898;"></div>
</div>
<div id="nav"><svg class="ico" style="left:0;top:0;" width="240" height="24" viewBox="187 610 240 24">
<!-- orbit -->
<path d="M197.9,612.7 V629.6" stroke="#6ab6f2" stroke-width="1.8" stroke-dasharray="4.2,1.6"/>
<ellipse cx="197.9" cy="621.3" rx="7.6" ry="3" fill="none" stroke="#3a3a3a" stroke-width="1"/>
<path d="M202.2,616.6 L205.6,620.2 L201,620.8 Z" fill="#333"/>
<path d="M212.6,620.2 H217.6 L215.1,623.4 Z" fill="#666"/>
<!-- look at -->
<path d="M226,618 L229.6,614 L233.2,616.6 L237.2,614 L239.6,618 Z" fill="#d8d8d8" stroke="#666" stroke-width="0.9" stroke-linejoin="round"/>
<rect x="225.6" y="618" width="14.3" height="10.6" fill="#e4e4e4" stroke="#666" stroke-width="1"/>
<rect x="227.2" y="619.8" width="11.1" height="7.2" fill="#5aaae8"/>
<!-- hand -->
<path d="M254.6,629.6 Q252.6,626 251,623.4 Q250.4,621.6 252,621.8 Q253.4,622.4 254.6,624.4 L254.2,616 Q254.4,614.8 255.4,615 Q256.2,615.2 256.4,616.4 L257,621 L257.2,614.4 Q257.6,613.3 258.6,613.6 Q259.3,613.9 259.3,615 L259.6,621 L260.6,615 Q261,614 261.9,614.3 Q262.6,614.7 262.4,615.8 L262,621.6 L264,617.8 Q264.8,617 265.6,617.5 Q266.2,618.2 265.6,619.4 L263.4,625.4 Q262.8,628 261.6,629.6 Z" fill="#fdfdfd" stroke="#777" stroke-width="0.9" stroke-linejoin="round"/>
<!-- zoom -->
<path d="M283.8,624.4 L288.3,628.8" stroke="#b98345" stroke-width="1.8"/>
<circle cx="280.7" cy="621.2" r="4.3" fill="#dedede" stroke="#555" stroke-width="1.1"/>
<path d="M288.4,615.6 H293 M290.7,613.4 V617.8 M288.4,619.6 H293" stroke="#444" stroke-width="1"/>
<!-- zoom window -->
<rect x="302.2" y="613.6" width="16.5" height="16" fill="none" stroke="#333" stroke-width="1" stroke-dasharray="2.2,1.4"/>
<path d="M313.6,624.6 L318.4,629.2" stroke="#b98345" stroke-width="1.6"/>
<path d="M318.6,626 V629.4 H315.2" fill="none" stroke="#8a5a20" stroke-width="1"/>
<circle cx="309" cy="620.2" r="6.5" fill="#dedede" stroke="#666" stroke-width="1.1"/>
<path d="M324.4,620.2 H329.6 L327,623.4 Z" fill="#666"/>
<!-- display -->
<rect x="336.6" y="615.4" width="15.2" height="10.8" fill="#d0d0d0" stroke="#555" stroke-width="1.1"/>
<rect x="339" y="617.6" width="10.4" height="6.4" fill="#a9a9a9"/>
<path d="M344.2,626.2 V628 M339.4,628.4 H349" stroke="#555" stroke-width="1.3"/>
<path d="M355.6,620.2 H360.8 L358.2,623.4 Z" fill="#666"/>
<!-- grid -->
<rect x="367.6" y="613.6" width="12.8" height="12.8" fill="#fff" stroke="#555" stroke-width="1.1"/>
<path d="M371.9,613.6 V626.4 M376.1,613.6 V626.4 M367.6,617.9 H380.4 M367.6,622.1 H380.4" stroke="#555" stroke-width="1.1"/>
<path d="M386.2,620.2 H391.4 L388.8,623.4 Z" fill="#666"/>
<!-- viewports -->
<rect x="398.6" y="614.6" width="15" height="13" fill="#e2e2e2" stroke="#555" stroke-width="1.1"/>
<path d="M406.1,614.6 V627.6 M398.6,621.1 H413.6" stroke="#555" stroke-width="1.3"/>
<path d="M400.8,616.6 h3 v2.4 h-3 Z M408.4,616.6 h3 v2.4 h-3 Z M400.8,623 h3 v2.4 h-3 Z M408.4,623 h3 v2.4 h-3 Z" fill="#cfcfcf" stroke="#8a8a8a" stroke-width="0.7"/>
<path d="M417.5,620.2 H422.7 L420.1,623.4 Z" fill="#666"/>
</svg>
</div>
<span class="t" id="s0" style="left:756.3px;transform:scaleX(0.985);top:617.7px;font-size:12.5px;color:#2e2e2e;-webkit-text-stroke:0.4px #2e2e2e;">1 Sketch Line | Length : 62.221 mm</span>
<svg class="ico" style="left:870px;top:90px;" width="95" height="95" viewBox="870 90 95 95">
<defs><filter id="cb" x="-30%" y="-30%" width="160%" height="160%"><feGaussianBlur stdDeviation="3"/></filter></defs>
<path d="M892,150 L910,168 L946,158 L938,150 Z" fill="#8a8a8a" opacity="0.35" filter="url(#cb)"/>
<path d="M896.6,115.4 L929.8,111.4 L946.3,122.2 L909.2,127.4 Z" fill="#f4f4f5"/>
<path d="M896.6,115.4 L909.2,127.4 L909.6,165.6 L897.7,148.3 Z" fill="#e3e3e6"/>
<path d="M909.2,127.4 L946.3,122.2 L944.8,155.8 L909.6,165.6 Z" fill="#ececee"/>
<path d="M896.6,115.4 L929.8,111.4 L946.3,122.2 L909.2,127.4 Z M896.6,115.4 L897.7,148.3 M946.3,122.2 L944.8,155.8" fill="none" stroke="#6a6a6a" stroke-width="0.9" stroke-dasharray="3.5,2"/>
<text transform="matrix(0.98,-0.16,0.02,1,914.8,150.2)" font-family="Liberation Sans, sans-serif" font-size="9.2" fill="#9a9a9c" textLength="25.5" lengthAdjust="spacingAndGlyphs">FRONT</text>
<text transform="matrix(0.95,-0.12,0.55,0.5,911.5,120.5)" font-family="Liberation Sans, sans-serif" font-size="7" fill="#a2a2a4">TOP</text>
<text transform="matrix(0.55,0.8,-0.05,1,898.5,133)" font-family="Liberation Sans, sans-serif" font-size="6" fill="#a2a2a4">LEFT</text>
<path d="M909.6,165.6 L893.2,139.8" stroke="#62cf62" stroke-width="1.4"/>
<path d="M909.6,165.6 L949.3,156.6" stroke="#e5484a" stroke-width="1.5"/>
<path d="M909.6,165.8 L907.7,123" stroke="#2f3fe6" stroke-width="1.7"/>
<text x="903.3" y="120" font-family="Liberation Sans, sans-serif" font-size="10.5" font-weight="bold" fill="#2f3fe6">Z</text>
<text x="950.2" y="158.6" font-family="Liberation Sans, sans-serif" font-size="9.5" fill="#e5484a">X</text>
<text x="890.5" y="145" font-family="Liberation Sans, sans-serif" font-size="9" fill="#62cf62" transform="rotate(-12 893 141)">Y</text>
</svg>
</body>
</html>
